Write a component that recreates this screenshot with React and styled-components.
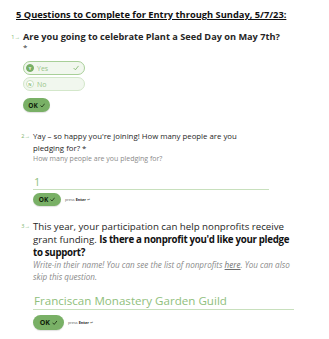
import styled, { createGlobalStyle } from 'styled-components'

const Global = createGlobalStyle`
    body {
        margin: 0;
        background: #ffffff;
        font-family: "Open Sans", "Liberation Sans", sans-serif;
        color: #1f1f1f;
    }
`
const Page = styled.div`
    width: 329px;
    height: 339px;
    overflow: hidden;
    display: flex;
    flex-direction: column;
`
const Title = styled.h1`
    margin: 8px 0 0 16px;
    font-family: "Open Sans", sans-serif;
    font-size: 9.3px;
    font-weight: 700;
    text-decoration: underline;
    line-height: 13px;
    color: #111;
`
const Question = styled.section`
    display: flex;
    margin-top: ${(p) => p.$top}px;
`
const Num = styled.div`
    width: ${(p) => p.$w}px;
    flex-shrink: 0;
    display: flex;
    justify-content: flex-end;
    padding-right: 3px;
    box-sizing: border-box;
    font-size: 5.5px;
    line-height: ${(p) => p.$lh}px;
    color: #7cb36a;
    white-space: nowrap;
`
const Body = styled.div`
    display: flex;
    flex-direction: column;
    align-items: flex-start;
    width: ${(p) => p.$w}px;
`
const Text = styled.div`
    font-size: ${(p) => p.$size}px;
    line-height: ${(p) => p.$lh}px;
    font-weight: ${(p) => (p.$bold ? 700 : 400)};
    color: #262626;
    b {
        font-weight: 700;
        color: #111;
        letter-spacing: -0.3px;
    }
`
const Star = styled.div`
    font-size: 8px;
    line-height: 8px;
    color: #333;
`
const Sub = styled.div`
    margin-top: ${(p) => p.$top}px;
    font-size: ${(p) => p.$size}px;
    line-height: ${(p) => p.$lh}px;
    color: #8a8a8a;
    font-style: ${(p) => (p.$italic ? 'italic' : 'normal')};
    a {
        color: #6e6e6e;
        text-decoration: underline;
    }
`
const Options = styled.div`
    display: flex;
    flex-direction: column;
    gap: 2px;
    margin-top: 10px;
`
const Option = styled.div`
    width: 62px;
    height: 14px;
    box-sizing: border-box;
    border-radius: 7px;
    border: 1px solid ${(p) => (p.$on ? '#a8cf98' : '#d3e7ca')};
    background: #f1f7ee;
    display: flex;
    align-items: center;
    padding: 0 5px 0 2px;
    gap: 3px;
    font-size: 7px;
    color: #9ac58a;
`
const Key = styled.span`
    width: 8px;
    height: 8px;
    border-radius: 50%;
    background: ${(p) => (p.$on ? '#78b066' : '#ffffff')};
    border: 1px solid ${(p) => (p.$on ? '#78b066' : '#c9e0be')};
    box-sizing: border-box;
    color: ${(p) => (p.$on ? '#fff' : '#86b875')};
    font-size: 4px;
    font-weight: 700;
    display: flex;
    align-items: center;
    justify-content: center;
`
const Label = styled.span`
    flex: 1;
`
const Tick = styled.span`
    display: flex;
    color: #7fb56e;
`
const Input = styled.div`
    margin-top: ${(p) => p.$top}px;
    width: ${(p) => p.$w}px;
    border-bottom: 1.5px solid #c8e0bd;
    font-size: ${(p) => p.$size}px;
    line-height: ${(p) => p.$lh}px;
    color: #8fc07c;
    padding-left: 1px;
`
const Actions = styled.div`
    display: flex;
    align-items: center;
    gap: 4px;
    margin-top: ${(p) => p.$top}px;
`
const OkButton = styled.div`
    width: ${(p) => p.$w}px;
    height: ${(p) => p.$h}px;
    border-radius: 8px;
    background: #79b066;
    color: #0f1f0a;
    font-size: ${(p) => p.$size}px;
    font-weight: 700;
    display: flex;
    align-items: center;
    justify-content: center;
    gap: 2px;
    box-shadow: 0 1px 1px rgba(0, 0, 0, 0.12);
`
const Hint = styled.span`
    font-size: 3.8px;
    color: #555;
    b {
        color: #222;
    }
`

function Check({ size = 6 }) {
    return (
        <svg width={size} height={size} viewBox="0 0 10 10" fill="none">
            <path d="M1.5 5.5 L4 8 L8.8 2" stroke="currentColor" strokeWidth="1.4" strokeLinecap="round" strokeLinejoin="round" />
        </svg>
    )
}

function App() {
    return (
        <Page>
            <Global />
            <Title>5 Questions to Complete for Entry through Sunday, 5/7/23:</Title>

            <Question $top={10}>
                <Num $w={23} $lh={12}>1→</Num>
                <Body $w={300}>
                    <Text $size={9.2} $lh={12} $bold>Are you going to celebrate Plant a Seed Day on May 7th?</Text>
                    <Star>*</Star>
                    <Options>
                        <Option $on>
                            <Key $on>Y</Key>
                            <Label>Yes</Label>
                            <Tick><Check size={6} /></Tick>
                        </Option>
                        <Option>
                            <Key>N</Key>
                            <Label>No</Label>
                        </Option>
                    </Options>
                    <Actions $top={7}>
                        <OkButton $w={27} $h={14} $size={6.5}>OK <Check size={5} /></OkButton>
                    </Actions>
                </Body>
            </Question>

            <Question $top={18}>
                <Num $w={33} $lh={12}>2→</Num>
                <Body $w={235}>
                    <Text $size={7.8} $lh={12}>Yay – so happy you're joining! How many people are you pledging for? *</Text>
                    <Sub $top={0} $size={7} $lh={10}>How many people are you pledging for?</Sub>
                    <Input $top={11} $w={235} $size={11} $lh={14}>1</Input>
                    <Actions $top={3}>
                        <OkButton $w={28} $h={13} $size={6.5}>OK <Check size={5} /></OkButton>
                        <Hint>press <b>Enter</b> ↵</Hint>
                    </Actions>
                </Body>
            </Question>

            <Question $top={14}>
                <Num $w={33} $lh={13}>3→</Num>
                <Body $w={262}>
                    <Text $size={9.7} $lh={13}>This year, your participation can help nonprofits receive grant funding. <b>Is there a nonprofit you'd like your pledge to support?</b></Text>
                    <Sub $top={0} $size={8.1} $lh={12} $italic>Write-in their name! You can see the list of nonprofits <a>here</a>. You can also skip this question.</Sub>
                    <Input $top={10} $w={260} $size={11.6} $lh={16}>Franciscan Monastery Garden Guild</Input>
                    <Actions $top={5}>
                        <OkButton $w={31} $h={15} $size={7}>OK <Check size={5.5} /></OkButton>
                        <Hint>press <b>Enter</b> ↵</Hint>
                    </Actions>
                </Body>
            </Question>
        </Page>
    )
}

export default App
